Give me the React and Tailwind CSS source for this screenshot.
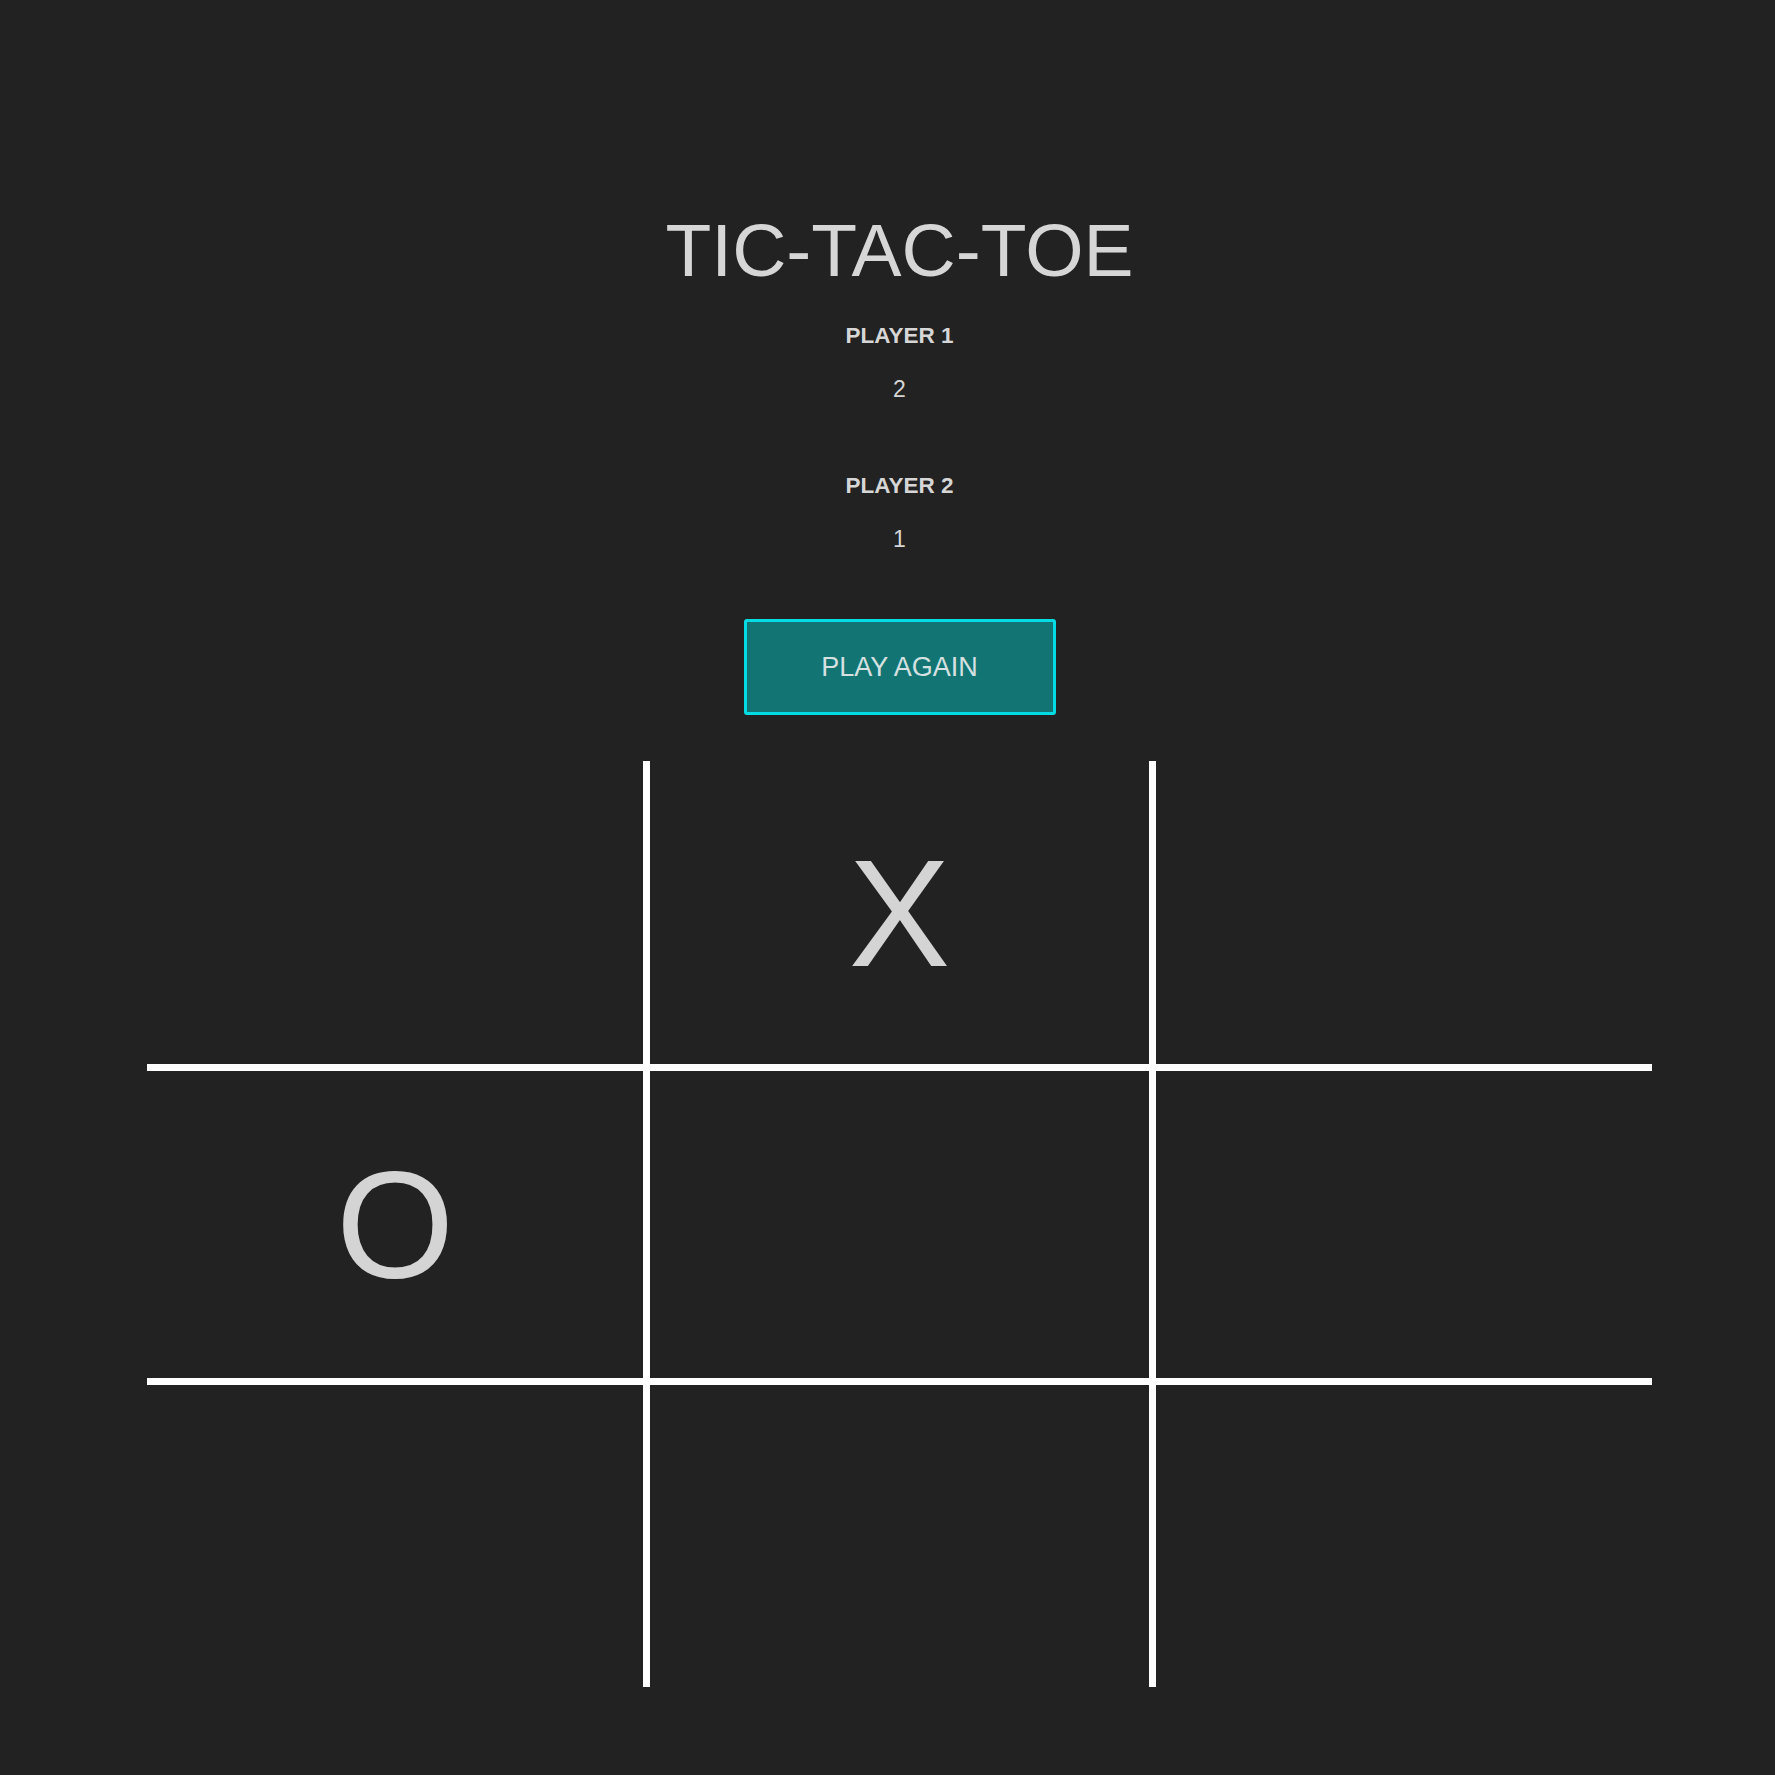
import React from 'react';

const cells = ['', 'X', '', 'O', '', '', '', '', ''];

const Cell = ({ value, index }) => {
    const row = Math.floor(index / 3);
    const col = index % 3;
    return (
        <div
            className={[
                'flex items-center justify-center border-white',
                col < 2 ? 'border-r-[7px]' : '',
                row < 2 ? 'border-b-[7px]' : '',
            ].join(' ')}
        >
            <span className="text-[152px] leading-none text-[#d4d4d4]">{value}</span>
        </div>
    );
};

const App = () => {
    return (
        <div className="min-h-screen bg-[#222222] font-['Liberation_Sans',Arial,sans-serif] text-[#d6d6d6]">
            <div className="ml-[147px] w-[1505px] pt-[213px] flex flex-col items-center">

                {/* Header */}
                <h1 className="text-[75px] leading-none">TIC-TAC-TOE</h1>

                {/* Scores */}
                <h3 className="mt-[37px] h-[22px] text-[22.5px] font-bold leading-none">PLAYER 1</h3>
                <p className="mt-[31px] h-[23px] text-[23px] leading-none">2</p>

                <h3 className="mt-[74px] h-[22px] text-[22.5px] font-bold leading-none">PLAYER 2</h3>
                <p className="mt-[31px] h-[23px] text-[23px] leading-none">1</p>

                <button className="mt-[68px] w-[312px] h-[96px] border-[3px] border-[#00dce4] bg-[#127574] rounded-[3px] text-[27px] text-[#d5e0e0]">
                    PLAY AGAIN
                </button>

                {/* Board */}
                <div className="mt-[46px] grid grid-cols-[503px_506px_496px] grid-rows-[310px_314px_302px]">
                    {cells.map((value, i) => (
                        <Cell key={i} value={value} index={i} />
                    ))}
                </div>
            </div>
        </div>
    );
};

export default App;
